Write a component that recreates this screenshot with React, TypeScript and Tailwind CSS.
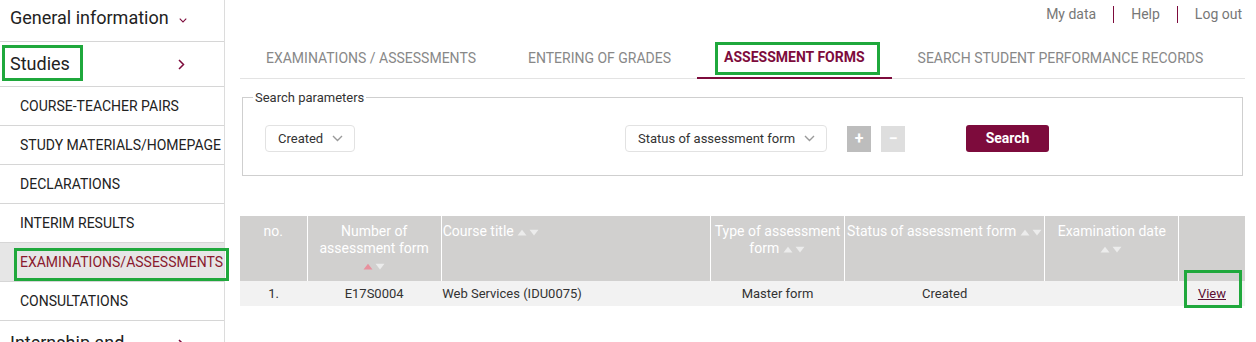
import React from 'react';

const MAROON = '#7d0b3c';

function ChevronDown({ className = '' }: { className?: string }) {
  return (
    <svg width="11" height="7" viewBox="0 0 11 7" className={className} fill="none">
      <path d="M1 1l4.5 4.5L10 1" stroke="currentColor" strokeWidth="1.4" />
    </svg>
  );
}

function ChevronRight() {
  return (
    <svg width="7" height="11" viewBox="0 0 7 11" fill="none" className="text-[#7d0b3c]">
      <path d="M1 1l4.5 4.5L1 10" stroke="currentColor" strokeWidth="1.5" />
    </svg>
  );
}

function SortArrows({ active = false }: { active?: boolean }) {
  return (
    <svg width="23" height="7" viewBox="0 0 23 7" className="inline-block align-middle">
      <path d="M0.5 6.5L5 0.8L9.5 6.5Z" fill={active ? '#e8909d' : '#ececec'} />
      <path d="M12.5 0.8L17 6.5L21.5 0.8Z" fill="#ececec" />
    </svg>
  );
}

function GreenBox({ className }: { className: string }) {
  return <span className={`pointer-events-none absolute border-[3px] border-[#1fa83c] ${className}`} />;
}

const subItems = [
  'COURSE-TEACHER PAIRS',
  'STUDY MATERIALS/HOMEPAGE',
  'DECLARATIONS',
  'INTERIM RESULTS',
  'EXAMINATIONS/ASSESSMENTS',
  'CONSULTATIONS',
];

function Sidebar() {
  return (
    <aside className="w-[225px] shrink-0 border-r border-[#dcdcdc] text-[#222]">
      <div className="flex h-[42px] items-center border-b border-[#d6d6d6] pl-[10px] pr-[37px] text-[18px]">
        <span className="flex-1 pb-[6px]">General information</span>
        <ChevronDown className="w-[8px] text-[#7d0b3c]" />
      </div>
      <div className="relative flex h-[45px] items-center border-b border-[#d6d6d6] pl-[10px] pr-[39px] text-[18px]">
        <span className="flex-1 pb-[2px]">Studies</span>
        <ChevronRight />
        <GreenBox className="left-[2px] top-[3px] h-[36px] w-[81px]" />
      </div>
      {subItems.map((item) => {
        const active = item === 'EXAMINATIONS/ASSESSMENTS';
        return (
          <div
            key={item}
            className={`relative flex h-[39px] items-center border-b border-[#d6d6d6] pl-[20px] text-[14px] whitespace-nowrap ${
              active ? 'bg-[#e6e6e6] text-[#8a1a2e]' : ''
            }`}
          >
            {item}
            {active && <GreenBox className="left-[14px] top-[5px] z-10 h-[33px] w-[215px]" />}
          </div>
        );
      })}
      <div className="flex h-[30px] items-start overflow-hidden pl-[10px] pr-[39px] pt-[8px] text-[18px]">
        <span className="flex-1">Internship and</span>
        <span className="pt-[10px]">
          <ChevronRight />
        </span>
      </div>
    </aside>
  );
}

const tabs = ['EXAMINATIONS / ASSESSMENTS', 'ENTERING OF GRADES', 'ASSESSMENT FORMS', 'SEARCH STUDENT PERFORMANCE RECORDS'];

function Select({ label }: { label: string }) {
  return (
    <div className="flex h-[27px] items-center gap-[9px] rounded-[4px] border border-[#e2e2e2] pl-[12px] pr-[11px] text-[13px] text-[#333]">
      {label}
      <ChevronDown className="text-[#9a9a9a]" />
    </div>
  );
}

function Main() {
  return (
    <main className="min-w-0 flex-1 pl-[15px] pr-[11px]">
      {/* top links */}
      <div className="flex h-[28px] items-center justify-end gap-[17px] text-[14px] text-[#777]">
        <span>My data</span>
        <span className="h-[17px] w-px bg-[#7d0b3c]" />
        <span>Help</span>
        <span className="h-[17px] w-px bg-[#7d0b3c]" />
        <span className="pr-[3px]">Log out</span>
      </div>

      {/* tabs */}
      <div className="mt-[10px] flex h-[41px] border-b border-[#e3e3e3] text-[14px]">
        {tabs.map((t) => {
          const active = t === 'ASSESSMENT FORMS';
          return (
            <div
              key={t}
              className={`relative flex items-center ${
                active
                  ? 'border-b-2 border-[#7d0b3c] font-bold text-[#7d0b3c] -mb-px pl-[27px] pr-[27px]'
                  : 'px-[26px] text-[#888]'
              }`}
            >
              {t}
              {active && <GreenBox className="left-[18px] top-[4px] h-[33px] w-[165px]" />}
            </div>
          );
        })}
      </div>

      {/* search parameters */}
      <fieldset className="mx-[2px] mt-[11px] border border-[#cfcfcf] pl-[22px] pt-[20px] pb-[23px]">
        <legend className="-ml-[12px] px-[2px] text-[13px] leading-[15px] text-[#333]">Search parameters</legend>
        <div className="flex items-center">
          <div className="w-[360px]">
            <div className="inline-flex">
              <Select label="Created" />
            </div>
          </div>
          <Select label="Status of assessment form" />
          <div className="ml-[20px] flex h-[26px] w-[24px] items-center justify-center bg-[#bdbdbd] text-[16px] font-bold text-white">
            +
          </div>
          <div className="ml-[10px] flex h-[26px] w-[24px] items-center justify-center bg-[#dedede] text-[16px] font-bold text-white">
            −
          </div>
          <button
            className="ml-[61px] h-[27px] w-[83px] rounded-[3px] text-[14px] font-bold text-white"
            style={{ backgroundColor: MAROON }}
          >
            Search
          </button>
        </div>
      </fieldset>

      {/* results table */}
      <table className="mt-[40px] w-full table-fixed border-collapse text-[13px]">
        <colgroup>
          <col className="w-[67px]" />
          <col className="w-[134px]" />
          <col className="w-[269px]" />
          <col className="w-[134px]" />
          <col className="w-[200px]" />
          <col className="w-[134px]" />
          <col className="w-[66px]" />
        </colgroup>
        <thead>
          <tr className="h-[65px] bg-[#d1d0cf] text-[14px] font-normal leading-[17px] text-white">
            <th className="border-r border-white pt-[7px] align-top font-normal">no.</th>
            <th className="border-r border-white px-[4px] pt-[7px] align-top font-normal">
              Number of assessment form
              <div className="mt-[4px] leading-[8px]">
                <SortArrows active />
              </div>
            </th>
            <th className="border-r border-white pl-[1px] pt-[7px] text-left align-top font-normal">
              Course title <SortArrows />
            </th>
            <th className="border-r border-white pt-[7px] align-top font-normal">
              Type of assessment form <SortArrows />
            </th>
            <th className="border-r border-white pl-[2px] pt-[7px] text-left align-top font-normal whitespace-nowrap">
              Status of assessment form <SortArrows />
            </th>
            <th className="border-r border-white pt-[7px] align-top font-normal">
              Examination date
              <div className="mt-[4px] leading-[8px]">
                <SortArrows />
              </div>
            </th>
            <th className="font-normal" />
          </tr>
        </thead>
        <tbody>
          <tr className="h-[25px] bg-[#f2f2f2] text-[#333]">
            <td className="text-center">1.</td>
            <td className="text-center">E17S0004</td>
            <td className="pl-[1px]">Web Services (IDU0075)</td>
            <td className="text-center">Master form</td>
            <td className="text-center">Created</td>
            <td />
            <td className="text-center">
              <span className="relative inline-block">
                <a href="#" className="text-[#5b0f33] underline">
                  View
                </a>
                <GreenBox className="-left-[14px] -top-[14px] h-[38px] w-[58px]" />
              </span>
            </td>
          </tr>
        </tbody>
      </table>
    </main>
  );
}

export default function App() {
  return (
    <div className="flex h-[342px] w-[1256px] overflow-hidden bg-white font-['Roboto',sans-serif]">
      <Sidebar />
      <Main />
    </div>
  );
}
